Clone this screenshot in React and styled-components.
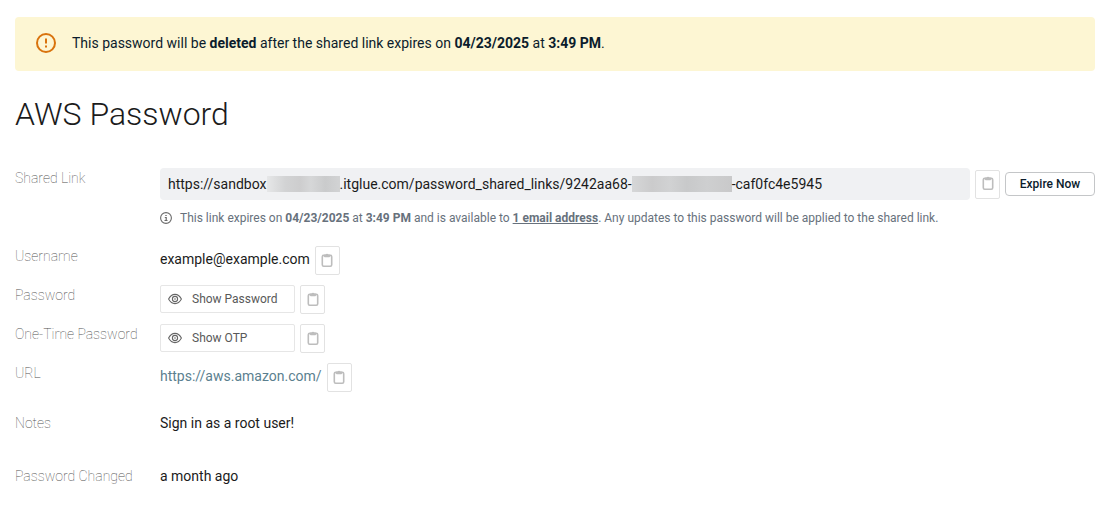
import React from 'react'
import styled, { createGlobalStyle } from 'styled-components'

const GlobalStyle = createGlobalStyle`
  * {
    box-sizing: border-box;
  }
  body {
    margin: 0;
    background: #fff;
    color: #1b1b1b;
    font-family: Roboto, "Liberation Sans", sans-serif;
    font-size: 14px;
    line-height: 20px;
  }
  button {
    font-family: inherit;
    cursor: pointer;
  }
`

const Page = styled.main`
  padding: 17px 14px 24px 15px;
`

const Alert = styled.div`
  display: flex;
  align-items: flex-start;
  gap: 16px;
  min-height: 54px;
  padding: 16px 21px;
  border-radius: 4px;
  background: #fdf6d3;
  color: #0b1c2c;

  p {
    margin: 0;
  }
  strong {
    font-weight: 700;
  }
`

const Title = styled.h1`
  margin: 23px 0 34px;
  font-size: 32px;
  line-height: 40px;
  font-weight: 300;
`

const Details = styled.dl`
  margin: 0;
`

const Row = styled.div`
  display: flex;
  align-items: flex-start;
  min-height: ${({ $height }) => $height || 39}px;
`

const Label = styled.dt`
  flex: 0 0 145px;
  color: #505050;
  font-weight: 100;
`

const Value = styled.dd`
  display: flex;
  flex: 1;
  flex-wrap: wrap;
  align-items: ${({ $align }) => $align || 'flex-start'};
  gap: 5px;
  min-width: 0;
  margin: 0;
`

const Text = styled.span`
  padding: 3px 0;
`

const LinkBox = styled.div`
  flex: 1;
  min-width: 0;
  min-height: 32px;
  padding: 6px 8px;
  border-radius: 4px;
  background: #f0f1f3;
  overflow-wrap: anywhere;
`

const Redacted = styled.span`
  display: inline-block;
  width: ${({ $width }) => $width}px;
  height: 16px;
  vertical-align: text-bottom;
  background: ${({ $tones }) => `linear-gradient(90deg, ${$tones})`};
`

const IconButton = styled.button`
  display: flex;
  align-items: center;
  justify-content: center;
  width: 25px;
  height: 29px;
  padding: 0 0 2px;
  border: 1px solid #e2e2e2;
  border-radius: 2px;
  background: #fff;
  color: #bdbdbd;
`

const ShowButton = styled.button`
  display: flex;
  align-items: center;
  gap: 10px;
  width: 135px;
  height: 28px;
  padding: 0 7px;
  border: 1px solid #e6e6e6;
  border-radius: 2px;
  background: #fff;
  color: #595959;
  font-size: 12px;
  line-height: 16px;
`

const ExpireButton = styled.button`
  width: 90px;
  height: 24px;
  padding: 0;
  border: 1px solid #c4c6c8;
  border-radius: 4px;
  background: #fff;
  color: #0b1c2c;
  font-size: 12px;
  font-weight: 500;
  line-height: 16px;
`

const Hint = styled.div`
  display: flex;
  flex: 1 0 100%;
  align-items: center;
  gap: 8px;
  margin-top: 5px;
  color: #67717c;
  font-size: 12px;
  line-height: 16px;

  svg {
    flex: none;
  }
  a {
    color: inherit;
    font-weight: 700;
  }
`

const UrlLink = styled.a`
  padding: 3px 0;
  color: #5b7f8f;
  text-decoration: none;
`

const AlertIcon = () => (
  <svg width="20" height="20" viewBox="0 0 20 20" fill="none" stroke="#d9730d" strokeWidth="2" aria-hidden="true">
    <circle cx="10" cy="10" r="9" />
    <path d="M10 5.5v5M10 12.5v2" />
  </svg>
)

const InfoIcon = () => (
  <svg width="12" height="12" viewBox="0 0 12 12" fill="none" stroke="#6a6a6a" aria-hidden="true">
    <circle cx="6" cy="6" r="5.4" strokeWidth="1.1" />
    <path d="M5.3 3.5h1.4M4.8 5.5h1.4v3M4.5 8.5h3" strokeWidth="1.2" />
  </svg>
)

const EyeIcon = () => (
  <svg width="14" height="12" viewBox="0 0 14 12" fill="none" stroke="#666" strokeWidth="1.1" aria-hidden="true">
    <path d="M.6 6C2.2 3 4.4 1.4 7 1.4S11.8 3 13.4 6C11.8 9 9.6 10.6 7 10.6S2.2 9 .6 6z" />
    <circle cx="7" cy="6" r="2.6" />
    <circle cx="7" cy="6" r=".8" fill="#666" stroke="none" />
  </svg>
)

const ClipboardIcon = () => (
  <svg width="12" height="14" viewBox="0 0 12 14" fill="none" aria-hidden="true">
    <rect x="1.3" y="2.4" width="9.4" height="10.8" rx="1.4" stroke="currentColor" strokeWidth="1.6" />
    <path d="M3 2.2q0-.6.6-.6h1a1.5 1.5 0 0 1 2.8 0h1q.6 0 .6.6v1.2q0 .8-.8.8H3.8Q3 4.200 3 3.400z" fill="currentColor" />
  </svg>
)

const CopyButton = ({ name }) => (
  <IconButton type="button" aria-label={`Copy ${name}`}>
    <ClipboardIcon />
  </IconButton>
)

const App = () => {
  return (
    <>
      <GlobalStyle />
      <Page>
        <Alert role="alert">
          <AlertIcon />
          <p>
            This password will be <strong>deleted</strong> after the shared link expires on{' '}
            <strong>04/23/2025</strong> at <strong>3:49 PM</strong>.
          </p>
        </Alert>

        <Title>AWS Password</Title>

        <Details>
          <Row $height={78}>
            <Label>Shared Link</Label>
            <Value $align="center">
              <LinkBox>
                https://sandbox
                <Redacted $width={73} $tones="#e6e7e8, #d2d3d4 25%, #cdcdce 45%, #d6d7d8 60%, #cacbcc 80%, #d2d3d4" />
                .itglue.com/password_shared_links/9242aa68-
                <Redacted $width={100} $tones="#d6d7d8, #cbcbcc 20%, #d1d2d3 38%, #c8c9ca 55%, #cecfd0 75%, #c9c9ca" />
                -caf0fc4e5945
              </LinkBox>
              <CopyButton name="shared link" />
              <ExpireButton type="button">Expire Now</ExpireButton>
              <Hint>
                <InfoIcon />
                <span>
                  This link expires on <b>04/23/2025</b> at <b>3:49 PM</b> and is available to{' '}
                  <a href="#emails">1 email address</a>. Any updates to this password will be applied to the
                  shared link.
                </span>
              </Hint>
            </Value>
          </Row>

          <Row>
            <Label>Username</Label>
            <Value>
              <Text>example@example.com</Text>
              <CopyButton name="username" />
            </Value>
          </Row>

          <Row>
            <Label>Password</Label>
            <Value>
              <ShowButton type="button">
                <EyeIcon />
                Show Password
              </ShowButton>
              <CopyButton name="password" />
            </Value>
          </Row>

          <Row>
            <Label>One-Time Password</Label>
            <Value>
              <ShowButton type="button">
                <EyeIcon />
                Show OTP
              </ShowButton>
              <CopyButton name="one-time password" />
            </Value>
          </Row>

          <Row $height={50}>
            <Label>URL</Label>
            <Value>
              <UrlLink href="https://aws.amazon.com/">https://aws.amazon.com/</UrlLink>
              <CopyButton name="URL" />
            </Value>
          </Row>

          <Row $height={53}>
            <Label>Notes</Label>
            <Value>Sign in as a root user!</Value>
          </Row>

          <Row $height={20}>
            <Label>Password Changed</Label>
            <Value>a month ago</Value>
          </Row>
        </Details>
      </Page>
    </>
  )
}

export default App
